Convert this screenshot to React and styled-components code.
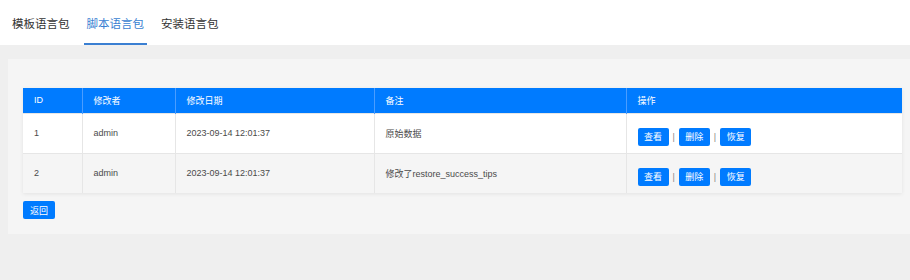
import React from 'react';
import styled, { createGlobalStyle } from 'styled-components';

const GlobalStyle = createGlobalStyle`
  html, body {
    margin: 0;
    padding: 0;
    background: #efefef;
    font-family: "Liberation Sans", Arial, "Noto Sans CJK SC", sans-serif;
  }
`;

const TabBar = styled.div`
  display: flex;
  height: 45px;
  padding-left: 9px;
  background: #fff;
  box-sizing: border-box;
`;

const Tab = styled.div`
  display: flex;
  align-items: center;
  height: 45px;
  padding: 2px 3px 0;
  margin-right: 11px;
  box-sizing: border-box;
  font-size: 11.5px;
  color: ${(p) => (p.active ? '#3a7fd2' : '#333')};
  border-bottom: 2px solid ${(p) => (p.active ? '#3a7fd2' : 'transparent')};
  cursor: pointer;
`;

const Panel = styled.div`
  margin: 14px 0 0 8px;
  padding: 29px 8px 15px 15px;
  background: #f5f5f5;
`;

const Table = styled.table`
  width: 879px;
  border-collapse: collapse;
  table-layout: fixed;
  font-size: 9px;
  color: #4a4a4a;
  box-shadow: 0 1px 4px rgba(0, 0, 0, 0.08);
`;

const Th = styled.th`
  height: 25px;
  padding: 0 11px;
  box-sizing: border-box;
  background: #007bff;
  color: #fff;
  font-weight: normal;
  text-align: left;
  border-left: 1px solid #4a9dff;
  &:first-child {
    border-left: none;
  }
`;

const Row = styled.tr`
  background: ${(p) => (p.striped ? '#f5f5f5' : '#fff')};
  border-top: 1px solid #e6e6e6;
`;

const Td = styled.td`
  height: 40px;
  padding: 0 11px;
  box-sizing: border-box;
  border-left: 1px solid #e6e6e6;
  vertical-align: middle;
  &:first-child {
    border-left: none;
  }
`;

const Actions = styled.div`
  display: flex;
  align-items: center;
  padding-top: 7px;
`;

const Btn = styled.button`
  height: 18px;
  width: 31px;
  padding: 0;
  border: none;
  border-radius: 2px;
  background: #007bff;
  color: #fff;
  font-family: inherit;
  font-size: 9px;
  cursor: pointer;
`;

const Sep = styled.span`
  margin: 0 4px;
  color: #888;
  font-size: 9px;
`;

const BackBtn = styled(Btn)`
  display: block;
  margin-top: 8px;
  width: 32px;
`;

const rows = [
  { id: 1, user: 'admin', date: '2023-09-14 12:01:37', note: '原始数据' },
  { id: 2, user: 'admin', date: '2023-09-14 12:01:37', note: '修改了restore_success_tips' },
];

export default function App() {
  return (
    <>
      <GlobalStyle />
      <TabBar>
        <Tab>模板语言包</Tab>
        <Tab active>脚本语言包</Tab>
        <Tab>安装语言包</Tab>
      </TabBar>
      <Panel>
        <Table>
          <colgroup>
            <col style={{ width: 59 }} />
            <col style={{ width: 93 }} />
            <col style={{ width: 199 }} />
            <col style={{ width: 252 }} />
            <col style={{ width: 276 }} />
          </colgroup>
          <thead>
            <tr>
              <Th>ID</Th>
              <Th>修改者</Th>
              <Th>修改日期</Th>
              <Th>备注</Th>
              <Th>操作</Th>
            </tr>
          </thead>
          <tbody>
            {rows.map((r, i) => (
              <Row key={r.id} striped={i % 2 === 1}>
                <Td>{r.id}</Td>
                <Td>{r.user}</Td>
                <Td>{r.date}</Td>
                <Td>{r.note}</Td>
                <Td>
                  <Actions>
                    <Btn>查看</Btn>
                    <Sep>|</Sep>
                    <Btn>删除</Btn>
                    <Sep>|</Sep>
                    <Btn>恢复</Btn>
                  </Actions>
                </Td>
              </Row>
            ))}
          </tbody>
        </Table>
        <BackBtn>返回</BackBtn>
      </Panel>
    </>
  );
}
